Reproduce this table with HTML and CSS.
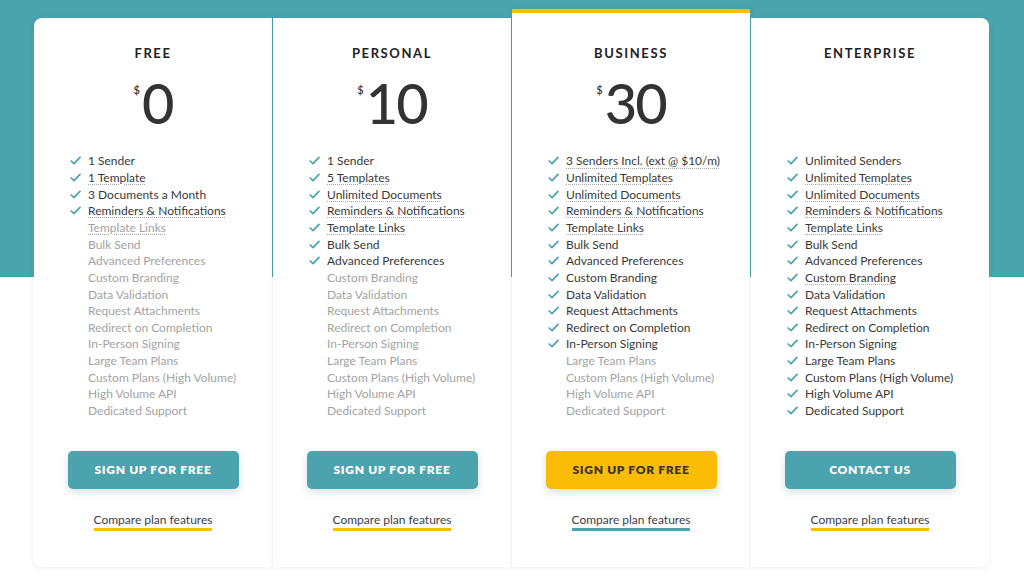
FILE: index.html
```html
<!DOCTYPE html>
<html lang="en">
<head>
<meta charset="utf-8">
<title>Pricing</title>
<link rel="stylesheet" href="styles.css">
</head>
<body>
<div class="pricing">
  <section class="card card-first">
    <h2 class="plan">FREE</h2>
    <div class="price"><span class="cur">$</span>0</div>
    <ul class="features">
      <li class="on"><svg class="chk" viewBox="0 0 11 9"><path d="M1.2 5 L4 7.6 L10 1.4"/></svg><span>1 Sender</span></li>
      <li class="on"><svg class="chk" viewBox="0 0 11 9"><path d="M1.2 5 L4 7.6 L10 1.4"/></svg><span class="tip">1 Template</span></li>
      <li class="on"><svg class="chk" viewBox="0 0 11 9"><path d="M1.2 5 L4 7.6 L10 1.4"/></svg><span>3 Documents a Month</span></li>
      <li class="on"><svg class="chk" viewBox="0 0 11 9"><path d="M1.2 5 L4 7.6 L10 1.4"/></svg><span class="tip">Reminders &amp; Notifications</span></li>
      <li class="off"><span class="tip">Template Links</span></li>
      <li class="off"><span>Bulk Send</span></li>
      <li class="off"><span>Advanced Preferences</span></li>
      <li class="off"><span>Custom Branding</span></li>
      <li class="off"><span>Data Validation</span></li>
      <li class="off"><span>Request Attachments</span></li>
      <li class="off"><span>Redirect on Completion</span></li>
      <li class="off"><span>In-Person Signing</span></li>
      <li class="off"><span>Large Team Plans</span></li>
      <li class="off"><span>Custom Plans (High Volume)</span></li>
      <li class="off"><span>High Volume API</span></li>
      <li class="off"><span>Dedicated Support</span></li>
    </ul>
    <a class="btn" href="#">SIGN UP FOR FREE</a>
    <a class="compare" href="#">Compare plan features</a>
  </section>

  <section class="card">
    <h2 class="plan">PERSONAL</h2>
    <div class="price"><span class="cur">$</span>10</div>
    <ul class="features">
      <li class="on"><svg class="chk" viewBox="0 0 11 9"><path d="M1.2 5 L4 7.6 L10 1.4"/></svg><span>1 Sender</span></li>
      <li class="on"><svg class="chk" viewBox="0 0 11 9"><path d="M1.2 5 L4 7.6 L10 1.4"/></svg><span class="tip">5 Templates</span></li>
      <li class="on"><svg class="chk" viewBox="0 0 11 9"><path d="M1.2 5 L4 7.6 L10 1.4"/></svg><span class="tip">Unlimited Documents</span></li>
      <li class="on"><svg class="chk" viewBox="0 0 11 9"><path d="M1.2 5 L4 7.6 L10 1.4"/></svg><span class="tip">Reminders &amp; Notifications</span></li>
      <li class="on"><svg class="chk" viewBox="0 0 11 9"><path d="M1.2 5 L4 7.6 L10 1.4"/></svg><span class="tip">Template Links</span></li>
      <li class="on"><svg class="chk" viewBox="0 0 11 9"><path d="M1.2 5 L4 7.6 L10 1.4"/></svg><span>Bulk Send</span></li>
      <li class="on"><svg class="chk" viewBox="0 0 11 9"><path d="M1.2 5 L4 7.6 L10 1.4"/></svg><span>Advanced Preferences</span></li>
      <li class="off"><span>Custom Branding</span></li>
      <li class="off"><span>Data Validation</span></li>
      <li class="off"><span>Request Attachments</span></li>
      <li class="off"><span>Redirect on Completion</span></li>
      <li class="off"><span>In-Person Signing</span></li>
      <li class="off"><span>Large Team Plans</span></li>
      <li class="off"><span>Custom Plans (High Volume)</span></li>
      <li class="off"><span>High Volume API</span></li>
      <li class="off"><span>Dedicated Support</span></li>
    </ul>
    <a class="btn" href="#">SIGN UP FOR FREE</a>
    <a class="compare" href="#">Compare plan features</a>
  </section>

  <section class="card card-featured">
    <h2 class="plan">BUSINESS</h2>
    <div class="price"><span class="cur">$</span>30</div>
    <ul class="features">
      <li class="on"><svg class="chk" viewBox="0 0 11 9"><path d="M1.2 5 L4 7.6 L10 1.4"/></svg><span class="tip">3 Senders Incl. (ext @ $10/m)</span></li>
      <li class="on"><svg class="chk" viewBox="0 0 11 9"><path d="M1.2 5 L4 7.6 L10 1.4"/></svg><span class="tip">Unlimited Templates</span></li>
      <li class="on"><svg class="chk" viewBox="0 0 11 9"><path d="M1.2 5 L4 7.6 L10 1.4"/></svg><span class="tip">Unlimited Documents</span></li>
      <li class="on"><svg class="chk" viewBox="0 0 11 9"><path d="M1.2 5 L4 7.6 L10 1.4"/></svg><span class="tip">Reminders &amp; Notifications</span></li>
      <li class="on"><svg class="chk" viewBox="0 0 11 9"><path d="M1.2 5 L4 7.6 L10 1.4"/></svg><span class="tip">Template Links</span></li>
      <li class="on"><svg class="chk" viewBox="0 0 11 9"><path d="M1.2 5 L4 7.6 L10 1.4"/></svg><span>Bulk Send</span></li>
      <li class="on"><svg class="chk" viewBox="0 0 11 9"><path d="M1.2 5 L4 7.6 L10 1.4"/></svg><span>Advanced Preferences</span></li>
      <li class="on"><svg class="chk" viewBox="0 0 11 9"><path d="M1.2 5 L4 7.6 L10 1.4"/></svg><span>Custom Branding</span></li>
      <li class="on"><svg class="chk" viewBox="0 0 11 9"><path d="M1.2 5 L4 7.6 L10 1.4"/></svg><span>Data Validation</span></li>
      <li class="on"><svg class="chk" viewBox="0 0 11 9"><path d="M1.2 5 L4 7.6 L10 1.4"/></svg><span>Request Attachments</span></li>
      <li class="on"><svg class="chk" viewBox="0 0 11 9"><path d="M1.2 5 L4 7.6 L10 1.4"/></svg><span>Redirect on Completion</span></li>
      <li class="on"><svg class="chk" viewBox="0 0 11 9"><path d="M1.2 5 L4 7.6 L10 1.4"/></svg><span>In-Person Signing</span></li>
      <li class="off"><span>Large Team Plans</span></li>
      <li class="off"><span>Custom Plans (High Volume)</span></li>
      <li class="off"><span>High Volume API</span></li>
      <li class="off"><span>Dedicated Support</span></li>
    </ul>
    <a class="btn btn-yellow" href="#">SIGN UP FOR FREE</a>
    <a class="compare compare-teal" href="#">Compare plan features</a>
  </section>

  <section class="card card-last">
    <h2 class="plan">ENTERPRISE</h2>
    <div class="price">&nbsp;</div>
    <ul class="features">
      <li class="on"><svg class="chk" viewBox="0 0 11 9"><path d="M1.2 5 L4 7.6 L10 1.4"/></svg><span>Unlimited Senders</span></li>
      <li class="on"><svg class="chk" viewBox="0 0 11 9"><path d="M1.2 5 L4 7.6 L10 1.4"/></svg><span class="tip">Unlimited Templates</span></li>
      <li class="on"><svg class="chk" viewBox="0 0 11 9"><path d="M1.2 5 L4 7.6 L10 1.4"/></svg><span class="tip">Unlimited Documents</span></li>
      <li class="on"><svg class="chk" viewBox="0 0 11 9"><path d="M1.2 5 L4 7.6 L10 1.4"/></svg><span class="tip">Reminders &amp; Notifications</span></li>
      <li class="on"><svg class="chk" viewBox="0 0 11 9"><path d="M1.2 5 L4 7.6 L10 1.4"/></svg><span class="tip">Template Links</span></li>
      <li class="on"><svg class="chk" viewBox="0 0 11 9"><path d="M1.2 5 L4 7.6 L10 1.4"/></svg><span>Bulk Send</span></li>
      <li class="on"><svg class="chk" viewBox="0 0 11 9"><path d="M1.2 5 L4 7.6 L10 1.4"/></svg><span>Advanced Preferences</span></li>
      <li class="on"><svg class="chk" viewBox="0 0 11 9"><path d="M1.2 5 L4 7.6 L10 1.4"/></svg><span class="tip">Custom Branding</span></li>
      <li class="on"><svg class="chk" viewBox="0 0 11 9"><path d="M1.2 5 L4 7.6 L10 1.4"/></svg><span>Data Validation</span></li>
      <li class="on"><svg class="chk" viewBox="0 0 11 9"><path d="M1.2 5 L4 7.6 L10 1.4"/></svg><span>Request Attachments</span></li>
      <li class="on"><svg class="chk" viewBox="0 0 11 9"><path d="M1.2 5 L4 7.6 L10 1.4"/></svg><span>Redirect on Completion</span></li>
      <li class="on"><svg class="chk" viewBox="0 0 11 9"><path d="M1.2 5 L4 7.6 L10 1.4"/></svg><span>In-Person Signing</span></li>
      <li class="on"><svg class="chk" viewBox="0 0 11 9"><path d="M1.2 5 L4 7.6 L10 1.4"/></svg><span>Large Team Plans</span></li>
      <li class="on"><svg class="chk" viewBox="0 0 11 9"><path d="M1.2 5 L4 7.6 L10 1.4"/></svg><span>Custom Plans (High Volume)</span></li>
      <li class="on"><svg class="chk" viewBox="0 0 11 9"><path d="M1.2 5 L4 7.6 L10 1.4"/></svg><span>High Volume API</span></li>
      <li class="on"><svg class="chk" viewBox="0 0 11 9"><path d="M1.2 5 L4 7.6 L10 1.4"/></svg><span>Dedicated Support</span></li>
    </ul>
    <a class="btn" href="#">CONTACT US</a>
    <a class="compare" href="#">Compare plan features</a>
  </section>
</div>
</body>
</html>
```
FILE: styles.css
```css
* { box-sizing: border-box; }

html, body {
  margin: 0;
  padding: 0;
}

body {
  font-family: Lato, "Open Sans", Arial, sans-serif;
  color: #333;
  background: linear-gradient(to bottom, #4aa3ad 0, #4aa3ad 277px, #ffffff 277px);
  min-height: 583px;
}

.pricing {
  display: flex;
  gap: 1px;
  margin: 18px 35px 0 34px;
  align-items: stretch;
}

.card {
  flex: 1 1 0;
  background: #fff;
  display: flex;
  flex-direction: column;
  align-items: center;
  padding: 27px 0 36px;
  box-shadow: 0 1px 6px rgba(40, 60, 60, 0.08);
  height: 549px;
}

.card-first { border-radius: 8px 0 0 8px; }
.card-last { border-radius: 0 8px 8px 0; }

.card-featured {
  margin-top: -9px;
  height: 558px;
  border-top: 4px solid #fbbd08;
  padding-top: 32px;
}

.plan {
  margin: 0;
  font-size: 13px;
  line-height: 16px;
  font-weight: 700;
  letter-spacing: 1.6px;
  color: #222;
}

.price {
  margin-top: 14px;
  height: 56px;
  font-size: 56px;
  line-height: 56px;
  font-weight: 500;
  color: #333;
  display: flex;
  align-items: flex-start;
  letter-spacing: -2px;
}

.cur {
  font-size: 11px;
  line-height: 11px;
  font-weight: 600;
  margin-top: 9px;
  margin-right: 2px;
  letter-spacing: 0;
}

.features {
  list-style: none;
  margin: 21px 0 0;
  padding: 0 0 0 36px;
  align-self: stretch;
}

.features li {
  display: flex;
  align-items: center;
  height: 16.65px;
  font-size: 12px;
  white-space: nowrap;
}

.features li:first-child { margin-top: 0.6px; }

.features li.on { color: #3a3a3a; }
.features li.off { color: #a3a3a3; padding-left: 18px; }

.chk {
  width: 11px;
  height: 9px;
  margin-right: 7px;
  flex: none;
}

.chk path {
  fill: none;
  stroke: #4aa3ad;
  stroke-width: 1.7;
  stroke-linecap: round;
  stroke-linejoin: round;
}

.tip {
  text-decoration: underline dotted;
  text-decoration-color: #a8a8a8;
  text-underline-offset: 2px;
}

.btn {
  margin-top: 32px;
  width: 171px;
  height: 39px;
  display: flex;
  align-items: center;
  justify-content: center;
  background: #4aa3ad;
  color: #fff;
  border-radius: 5px;
  font-size: 12px;
  font-weight: 800;
  letter-spacing: 0.7px;
  text-decoration: none;
  box-shadow: 0 3px 8px rgba(30, 80, 90, 0.18);
}

.btn-yellow {
  background: #fbbc05;
  color: #3a3328;
}

.compare {
  margin-top: 23px;
  font-size: 12px;
  color: #3d3d4a;
  text-decoration: none;
  padding-bottom: 1px;
  border-bottom: 3px solid #fbbc05;
  line-height: 15px;
}

.compare-teal { border-bottom-color: #4aa3ad; }
```
